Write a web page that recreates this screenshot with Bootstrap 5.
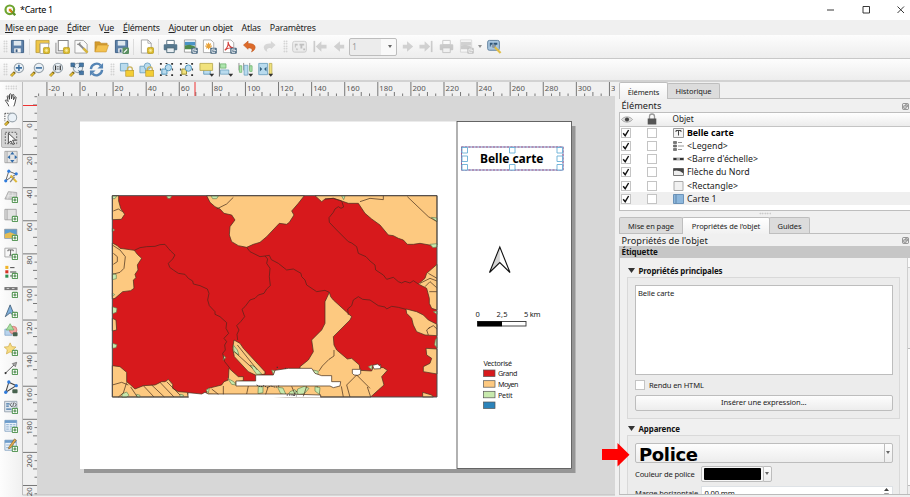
<!DOCTYPE html>
<html lang="fr">
<head>
<meta charset="utf-8">
<title>*Carte 1</title>
<meta name="viewport" content="width=device-width, initial-scale=1">
<link rel="stylesheet" href="https://cdn.jsdelivr.net/npm/bootstrap@5.3.0/dist/css/bootstrap.min.css">
<style>
body{font-family:"Noto Sans","Open Sans",sans-serif;font-size:9px;line-height:12px;color:#222;background:#f0f0f0;width:910px;height:497px;overflow:hidden;cursor:default}
svg{display:block;flex:none}
.titlebar{height:20px;background:#fff;padding:0 5px 0 4px;letter-spacing:-.3px}
.menus{height:15px;padding-left:5px;background:#f0f0f0;gap:8.8px;font-size:8.9px;line-height:15px;letter-spacing:-.21px}
.menus a{color:#222;text-decoration:none;white-space:nowrap}
.tools{background:linear-gradient(#fdfdfd,#ededed);border-bottom:1px solid #c8c8c8;padding-left:7.5px}
.tools-a{height:24px}.tools-b{height:23px;border-bottom:2px solid #d2d2d2}
.slot{width:19.8px;flex:none;display:flex;justify-content:center;align-items:center}
.slot svg{width:15px;height:15px}
.gap-line{width:5.2px;flex:none;height:16px;border-left:1px solid #dcdcdc;margin-left:2px;margin-right:-2px}
.grip{width:5px;height:13px;flex:none;background:radial-gradient(circle,#c2c2c2 .7px,transparent .9px) 0 0/2.5px 2.5px}
.off{opacity:.33;filter:grayscale(1)}
.pagebox{width:48px;height:18px;border:1px solid #bdbdbd;border-radius:2px;background:linear-gradient(90deg,#ececec 68%,#f9f9f9 68%);color:#999;padding:0 4px 0 2px;font-size:8px;flex:none}
.caret{width:0;height:0;border:2.6px solid transparent;border-top:3px solid #666;border-bottom:0}
.workspace{height:415px}
.sidebar-tools{width:22px;flex:none;background:linear-gradient(90deg,#fdfdfd,#f0f0f0);padding-top:3px}
.sidebar-tools .slot{width:20px;height:19.2px;margin-left:1px;border-radius:2px}
.sidebar-tools .slot svg{width:14px;height:14px}
.sidebar-tools .picked{background:#d3d3d3;border:1px solid #b4b4b4}
.grip-h{width:12px;height:5px;margin:0 auto;background:radial-gradient(circle,#c2c2c2 .7px,transparent .9px) 0 0/2.5px 2.5px;flex:none}
.splitter{width:4px;flex:none}
.dock{width:291px;flex:none}
.dock-tabs{height:17px;border-bottom:1px solid #bebebe}
.dock-tabs button{font-family:inherit;font-size:7.5px;line-height:10px;letter-spacing:-.1px;border:1px solid #bebebe;border-bottom:0;background:#dcdcdc;color:#222;padding:1px 0 0;height:15.5px;border-radius:2px 2px 0 0;margin-left:-1px;white-space:nowrap}
.dock-tabs button.now{background:linear-gradient(#fff,#f1f1f1);height:17px;margin-bottom:-1px}
.dock-title{height:12.5px;padding:2px 1px 0 2.5px;font-size:9.2px}
.tree{height:99px;background:#fff;border:1px solid #bebebe;border-right:0}
.tree-head{height:14px;background:linear-gradient(#fff,#ececec);border-bottom:1px solid #c4c4c4;font-size:8.2px}
.tree-row{height:13.15px;font-size:8.8px;white-space:nowrap}
.item-icon{margin-right:3.5px}
.tick{width:10px;height:10px;border:1px solid #c4c4c4;background:#fff;flex:none}
.c1{width:26.5px;padding-left:1px}.c2{width:26px}
.seam{height:6px}
.section-bar{height:12px;background:#c6c6c6;font-weight:700;font-size:8px;letter-spacing:-.1px;padding-left:2.5px;color:#111}
.props{height:236.5px;overflow:hidden;border-left:1px solid #c4c4c4;border-bottom:1px solid #bbb}
.props-in{width:288px;border-right:1px solid #cfcfcf;padding:6.5px 7px 0;height:237px}
.track{width:3px;background:linear-gradient(#fbfbfb 0 9px,#c9c9c9 9px 10px,#f0f0f0 10px 90px,#bbb 90px 91px,#fcfcfc 91px 227px,#bbb 227px 228px,#eee 228px)}
.sec-h{font-weight:700;font-size:7.9px;letter-spacing:-.1px;height:12px;padding-left:.5px;color:#111}
.frame-g{border:1px solid #d9d9d9;background:#ececec;padding:7px 6.5px 0 7px}
.frame-a{height:142px}.frame-b{height:80px}
.note{height:90.5px;border:1px solid #bdbdbd;background:#fff;padding:1.5px 2px;font-size:7.6px;letter-spacing:-.12px}
.small-t{font-size:7.6px;letter-spacing:-.15px}
.fld{width:65.5px}
.row-c{margin-top:3.5px}.row-m{margin-top:4px}
.num{padding:0 3px}
.btn-q{height:15.5px;border:1px solid #bdbdbd;border-radius:2px;background:linear-gradient(#fdfdfd,#ededed);font-size:7.6px;letter-spacing:-.1px;padding:0;line-height:13px;color:#222;font-family:inherit}
.drop{width:9px;border:1px solid #bdbdbd;border-radius:0 2px 2px 0;background:linear-gradient(#fdfdfd,#ededed);margin-left:-1px}
.police{height:20px;border:1px solid #bdbdbd;border-radius:2px 0 0 2px;background:linear-gradient(#fdfdfd,#ededed);font:700 18px/21px "DejaVu Sans","Noto Sans",sans-serif;padding-left:3px;color:#000;letter-spacing:-.35px}
.ink{width:63px;height:15.5px;border:1px solid #bdbdbd;border-radius:2px;background:#f7f7f7;padding:1px 2px}
.ink i{display:block;height:100%;background:#000;border-radius:1px}
.pointer{position:absolute;left:602px;top:443px}
text{font-family:"Noto Sans",sans-serif}
.rl text{font-size:7.8px;fill:#555}
</style>
<script src="https://cdn.jsdelivr.net/npm/bootstrap@5.3.0/dist/js/bootstrap.bundle.min.js"></script>
</head>
<body>
<svg width="0" height="0" class="position-absolute">
<defs>
<g id="plus"><rect x="9.5" y="9.5" width="6" height="6" rx="1" fill="#fff" stroke="#5b9a5b" stroke-width="1.3"/><path d="M12.5 10.7v3.6M10.7 12.5h3.6" stroke="#3f803f" stroke-width="1.2"/></g>
<g id="spark"><rect x="9" y="9" width="6.5" height="6.5" rx="1.2" fill="#d9b92a" stroke="#b3951a" stroke-width=".7"/><path d="M12.2 10.2v4M10.2 12.2h4M10.9 10.9l2.7 2.7M13.6 10.9l-2.7 2.7" stroke="#fff3b0" stroke-width=".7"/></g>
<g id="expo"><rect x="8.8" y="9.3" width="7" height="6.4" rx="1" fill="#4b6a82"/><path d="M14 10.8h-3.4v3.4H14M12 12.4h3" stroke="#fff" fill="none" stroke-width=".9"/></g>
<g id="dn"><path d="M11 12.5h5.2l-2.6 3.2z" fill="#333"/></g>
<g id="lens"><path d="M1.2 14.8l4-4" stroke="#7a6514" stroke-width="3"/><path d="M1.2 14.8l3-3" stroke="#e3bd3a" stroke-width="2"/><circle cx="9.5" cy="6.3" r="5" fill="#eaf1f7" stroke="#9aa5ad" stroke-width="1.2"/></g>
<g id="lock"><path d="M9 9.5V7.800a2.600 2.600 0 0 1 5.200 0v1.700" fill="none" stroke="#c9b25c" stroke-width="1.4"/><rect x="7.2" y="9" width="8.600" height="6.200" fill="#f3cd35" stroke="#b8962a" stroke-width=".7"/></g>
<g id="corners" fill="#333"><path d="M1 1h2v2H1zM7 1h2v1H7zM13 1h2v2h-2zM1 7h1v2H1zM1 13h2v2H1zM7 14h2v1H7zM13 13h2v2h-2zM14 7h1v2h-1z"/></g>
<symbol id="save" viewBox="0 0 16 16"><path d="M1.500 1.500h13v13h-13z" fill="#5c80a8" stroke="#3e5f84"/><path d="M4 2h8v5H4z" fill="#dfe8ef"/><path d="M4.500 10h7v4.500h-7z" fill="#f4f4f4"/><path d="M6 11h2v3H6z" fill="#3e5f84"/></symbol>
<symbol id="newlay" viewBox="0 0 16 16"><path d="M1 1.500h14v4H5v9H1z" fill="#efc648" stroke="#ad8c22" stroke-width=".7"/><path d="M5.500 4.500h9v11h-9z" fill="#fdfdfd" stroke="#999" stroke-width=".8"/><use href="#spark"/></symbol>
<symbol id="dup" viewBox="0 0 16 16"><path d="M1 4v11h10" fill="none" stroke="#888"/><path d="M3.500 1.500h10.500v11h-10.500z" fill="#fff" stroke="#888" stroke-width="1.100"/><use href="#spark"/></symbol>
<symbol id="mgr" viewBox="0 0 16 16"><path d="M1 1.500h9l4 4v9.500H1z" fill="#fafafa" stroke="#999" stroke-width=".9"/><path d="M5 5l9 9" stroke="#8a8a8a" stroke-width="2.200"/><path d="M10 10l4.500 4.500" stroke="#d8b63c" stroke-width="2.600"/><path d="M3.500 5.500a2.200 2.200 0 0 0 3-2" fill="none" stroke="#888" stroke-width="1.300"/></symbol>
<symbol id="open" viewBox="0 0 16 16"><path d="M1 13.500V3h5l1.500 1.500H14V7" fill="#d49b2b" stroke="#b9852a" stroke-width=".6"/><path d="M1 13.800L3.500 6.500H15.500L13 13.800z" fill="#f3c14f" stroke="#c2902e" stroke-width=".6"/></symbol>
<symbol id="saveas" viewBox="0 0 16 16"><use href="#save"/><rect x="9" y="9" width="7" height="7" rx="1" fill="#5a8f62"/><path d="M10.500 14.500l3.500-3.500" stroke="#fff" stroke-width="1.300"/></symbol>
<symbol id="page" viewBox="0 0 16 16"><path d="M2.500 1h7l3.500 3.500V15H2.500z" fill="#fff" stroke="#999" stroke-width=".9"/><path d="M9.500 1v3.500H13" fill="none" stroke="#999" stroke-width=".8"/><use href="#spark"/></symbol>
<symbol id="print" viewBox="0 0 16 16"><path d="M4 1.500h8V6H4z" fill="#fff" stroke="#57707f" stroke-width="1"/><rect x=".8" y="5.500" width="14.400" height="6.500" rx="1" fill="#56788f"/><path d="M4 9.500h8v5H4z" fill="#e8eef2" stroke="#44606f" stroke-width=".9"/></symbol>
<symbol id="eimg" viewBox="0 0 16 16"><path d="M1.500 1h12v13h-12z" fill="#fff" stroke="#888" stroke-width=".8"/><path d="M2 3h11v4H2z" fill="#4a93c6"/><path d="M2 7l5-1 6 2v3H2z" fill="#4f8a4a"/><use href="#expo"/></symbol>
<symbol id="esvg" viewBox="0 0 16 16"><path d="M1.500 1h8l3 3v10.500h-11z" fill="#fff" stroke="#999" stroke-width=".8"/><path d="M7 4v7M3.500 7.500h7M4.500 5l5 5M9.500 5l-5 5" stroke="#e8a23a" stroke-width="1.300"/><use href="#expo"/></symbol>
<symbol id="epdf" viewBox="0 0 16 16"><path d="M1.500 1h8l3 3v10.500h-11z" fill="#fff" stroke="#999" stroke-width=".8"/><path d="M3 12c3-3 4-6 3.500-9C7 7 9 9 12 9.500 8 9 5 10 3 12z" fill="none" stroke="#d3423c" stroke-width="1.200"/><use href="#expo"/></symbol>
<symbol id="undo" viewBox="0 0 16 16"><path d="M1.500 6.500L6.500 2.200V4.800c5 0 8 1.500 7.500 4.700-.3 2-2 3.400-4 4.300 1.500-2.300 1-4.300-3.500-4.300V11z" fill="#dd6b2b" stroke="#b8531c" stroke-width=".5"/></symbol>
<symbol id="redo" viewBox="0 0 16 16"><path d="M14.500 6.500L9.500 2.200V4.800c-5 0-8 1.500-7.500 4.700.3 2 2 3.400 4 4.300-1.500-2.300-1-4.300 3.500-4.300V11z" fill="#999"/></symbol>
<symbol id="atlas" viewBox="0 0 16 16"><rect x=".7" y="2.500" width="14.600" height="11.500" rx="2" fill="#d2dfe8" stroke="#777"/><path d="M3 5h3v2H4v2H3zM8 5h5v2h-2v3H9V7H8zM4 10h2v2H5zM12 10h2v2h-2z" fill="#555"/></symbol>
<symbol id="first" viewBox="0 0 16 16"><path d="M2.500 2v12" stroke="#777" stroke-width="1.800"/><path d="M4 8l6-5.500V6h5.500v4H10v3.500z" fill="#888"/></symbol>
<symbol id="prev" viewBox="0 0 16 16"><path d="M2 8l6.500-5.500V6H13v4H8.500v3.500z" fill="#888"/></symbol>
<symbol id="next" viewBox="0 0 16 16"><path d="M14 8L7.500 2.500V6H3v4h4.500v3.500z" fill="#888"/></symbol>
<symbol id="last" viewBox="0 0 16 16"><path d="M13.500 2v12" stroke="#777" stroke-width="1.800"/><path d="M12 8L6 2.500V6H.5v4H6v3.500z" fill="#888"/></symbol>
<symbol id="aset" viewBox="0 0 16 16"><rect x=".7" y="1.500" width="12.500" height="10.500" rx="1.800" fill="#a9c6df" stroke="#5e7f9d"/><path d="M3 4h3v2H4v2H3zM7 4h4v2H9v2H8V6H7z" fill="#2f5678"/><path d="M6.500 7l8 8" stroke="#e0bd45" stroke-width="2.400"/><circle cx="7" cy="7.500" r="2" fill="#8a97a3"/></symbol>
<symbol id="zin" viewBox="0 0 16 16"><use href="#lens"/><path d="M9.500 3v6.600M6.200 6.300h6.600" stroke="#3d6f9f" stroke-width="1.700"/></symbol>
<symbol id="zout" viewBox="0 0 16 16"><use href="#lens"/><path d="M6.200 6.300h6.600" stroke="#3d6f9f" stroke-width="1.700"/></symbol>
<symbol id="z11" viewBox="0 0 16 16"><use href="#lens"/><path d="M7 3.700v5M12 3.700v5M9.500 4.500v1M9.500 7v1" stroke="#333" stroke-width="1.300"/></symbol>
<symbol id="zfull" viewBox="0 0 16 16"><use href="#lens"/><path d="M2 1h4v4H2zM11 1h4.500v4H11zM11 9.500h4.500v4H11z" fill="#4678a8" stroke="#2f5678" stroke-width=".6"/><path d="M4 4l3 2M12 4l-2 2M12 11l-2-2" stroke="#2f5678"/></symbol>
<symbol id="refresh" viewBox="0 0 16 16"><path d="M2 7.500A6.200 6.200 0 0 1 12.500 3.600" fill="none" stroke="#5585b5" stroke-width="2.500"/><path d="M15 1v6H9z" fill="#5585b5"/><path d="M14 8.500A6.200 6.200 0 0 1 3.500 12.400" fill="none" stroke="#5585b5" stroke-width="2.500"/><path d="M1 15V9h6z" fill="#5585b5"/></symbol>
<symbol id="lk" viewBox="0 0 16 16"><path d="M1.500 1.500h8v8h-8z" fill="#b9dbee" stroke="#6ba0bf" stroke-width=".9"/><use href="#lock"/></symbol>
<symbol id="ulk" viewBox="0 0 16 16"><path d="M1 4.500h6v7H1z" fill="#b9dbee" stroke="#6ba0bf" stroke-width=".9"/><circle cx="9" cy="4.500" r="3.500" fill="#b9dbee" stroke="#6ba0bf" stroke-width=".9"/><use href="#lock"/></symbol>
<symbol id="grp" viewBox="0 0 16 16"><use href="#corners"/><path d="M3 7.500h5.500V13H3z" fill="#b9dbee" stroke="#4f93bb"/><circle cx="10" cy="6" r="3.400" fill="#b9dbee" stroke="#4f93bb"/></symbol>
<symbol id="ugrp" viewBox="0 0 16 16"><use href="#corners"/><path d="M3 7.500h5V13H3z" fill="#f1e27c" stroke="#998b2c"/><circle cx="10" cy="6.500" r="3.400" fill="#b9dbee" stroke="#4f93bb"/></symbol>
<symbol id="raise" viewBox="0 0 16 16"><path d="M5 7.500h7v5.500H5z" fill="#b9dbee" stroke="#6ba0bf"/><path d="M1 1.500h13.500v7.500H1z" fill="#f1e27c" stroke="#b7a850" stroke-width=".9"/><use href="#dn"/></symbol>
<symbol id="alignl" viewBox="0 0 16 16"><path d="M1.500 .5v15" stroke="#666"/><path d="M2.500 2h6v4.500h-6z" fill="#aee5ae" stroke="#6bb06b" stroke-width=".8"/><path d="M2.500 8.500h9v4.500h-9z" fill="#b9dbee" stroke="#6ba0bf" stroke-width=".8"/><use href="#dn"/></symbol>
<symbol id="distr" viewBox="0 0 16 16"><path d="M1 1v8M6 1v8M12.500 1v8" stroke="#777" stroke-width=".8"/><path d="M1.500 4h2.500v7H1.500zM12.500 4H15v6h-2.500z" fill="#aee5ae" stroke="#6bb06b" stroke-width=".8"/><path d="M6.500 3.500h4V14h-4z" fill="#b9dbee" stroke="#6ba0bf" stroke-width=".8"/><use href="#dn"/></symbol>
<symbol id="resz" viewBox="0 0 16 16"><path d="M.8 1.500h9.400v12H.8z" fill="#b9dbee" stroke="#6ba0bf" stroke-width=".9"/><path d="M2 5v5l2.500-2.500zM9 5v5L6.500 7.500z" fill="#33607f"/><path d="M12 1.500h2.800v12H12z" fill="#f1e27c" stroke="#b7a850" stroke-width=".8"/><use href="#dn"/></symbol>
<symbol id="hand" viewBox="0 0 16 16"><path d="M5.500 15.200C4.500 12 2.500 10.500 1.500 8.500c.8-1 2-.4 3.200 1.200L3.700 4c.2-1.300 1.500-1.200 1.800 0l.8 3.200L6.300 1.800c.3-1.200 1.700-1.200 2 0l.3 5 1-4.500c.4-1.100 1.800-.8 1.800.4l-.5 5 1.500-3c.7-.8 1.700-.3 1.400.8-.8 3-1 6.500-2.600 9.700" fill="#fff" stroke="#333" stroke-width="1"/></symbol>
<symbol id="ztool" viewBox="0 0 16 16"><path d="M1 1.500h8M1 1.500v9" stroke="#333" stroke-dasharray="1.500 1.200"/><use href="#lens"/></symbol>
<symbol id="sel" viewBox="0 0 16 16"><path d="M1.500 1.500h13v13h-13z" fill="#dcdcdc" stroke="#555" stroke-dasharray="2 1.500"/><path d="M5 2.500l8.500 8H9.800l2 4-1.800.9-2-4L5 13.800z" fill="#fff" stroke="#222" stroke-width=".9"/></symbol>
<symbol id="mvc" viewBox="0 0 16 16"><path d="M1 1.500h14v13H1zM3.500 1.500v13" fill="#e4e4e4" stroke="#999" stroke-width=".9"/><path d="M9.500 2l2.400 3H7.100zM9.500 14.500l2.400-3H7.100zM4 8.200l3-2.400v4.800zM15.200 8.200l-3-2.400v4.800z" fill="#326ba8"/></symbol>
<symbol id="nodes" viewBox="0 0 16 16"><path d="M2 13.500L5.500 2.500 14 6l-7 4z" fill="none" stroke="#555"/><circle cx="5.500" cy="2.500" r="1.800" fill="#2f7bdc"/><circle cx="14" cy="5.500" r="1.800" fill="#2f7bdc"/><circle cx="2" cy="13.500" r="1.800" fill="#2f7bdc"/><path d="M7.500 7.500l7 7.500" stroke="#dfb93a" stroke-width="2.400"/><path d="M7 15l5-6" stroke="#888" stroke-width="1.500"/></symbol>
<symbol id="m3d" viewBox="0 0 16 16"><path d="M1 11.500L5 3l9.500 1v8z" fill="#cfcfcf" stroke="#999" stroke-width=".8"/><path d="M3 8l11-1M6 4l-2 7M10 4v8" stroke="#eee" stroke-width=".7"/><use href="#plus"/></symbol>
<symbol id="amap" viewBox="0 0 16 16"><path d="M1 1.500h13v12H1zM3.500 1.500v12" fill="#e2e2e2" stroke="#999" stroke-width=".9"/><use href="#plus"/></symbol>
<symbol id="aimg" viewBox="0 0 16 16"><path d="M.7 2.500h14v10.500H.7z" fill="#5d9dd0" stroke="#8a8a8a" stroke-width=".7"/><path d="M1 8l6-2 7.500 3v3.700H1z" fill="#e6bd52"/><use href="#plus"/></symbol>
<symbol id="atxt" viewBox="0 0 16 16"><path d="M1 2.500h13v10H1z" fill="#f7f7f7" stroke="#999" stroke-width=".9"/><path d="M4.500 6V4.500h6V6M7.500 4.500v6M6 10.500h3" fill="none" stroke="#555"/><use href="#plus"/></symbol>
<symbol id="aleg" viewBox="0 0 16 16"><path d="M1.500 1h3.500v3.500H1.500z" fill="#f0b429"/><path d="M1.500 6h3.500v3.500H1.500z" fill="#d43324"/><path d="M1.500 11h3.500v3.500H1.500z" fill="#2f8f52"/><path d="M7 3h5M7 8h7M7 12.500h3" stroke="#444" stroke-width="1.100"/><use href="#plus"/></symbol>
<symbol id="abar" viewBox="0 0 16 16"><path d="M.5 3.500h15v3.500H.5z" fill="#777"/><path d="M3 5.200h3M9 5.200h3" stroke="#ddd"/><use href="#plus"/></symbol>
<symbol id="anor" viewBox="0 0 16 16"><path d="M1.500 14.500L7 1l5.500 13.500L7 10z" fill="#7fb0dc" stroke="#46617a"/><use href="#plus"/></symbol>
<symbol id="ashp" viewBox="0 0 16 16"><path d="M1 7h8v7H1z" fill="#b9d4ee" stroke="#789fc4" stroke-width=".8"/><circle cx="10.500" cy="8" r="4.300" fill="#f0a6a0" stroke="#cc6f69" stroke-width=".8"/><path d="M2.500 8L7 .8 11.300 8z" fill="#a9dfa2" stroke="#6bab66" stroke-width=".8"/><rect x="10" y="10.500" width="5.500" height="4.500" rx="1" fill="#47624e"/></symbol>
<symbol id="astar" viewBox="0 0 16 16"><path d="M7 1l2 4.300 4.700.5-3.500 3.100 1 4.700L7 11.200l-4.200 2.400 1-4.700L.3 5.800 5 5.300z" fill="#f7dd83" stroke="#cfa945" stroke-width=".8"/><use href="#plus"/></symbol>
<symbol id="aarr" viewBox="0 0 16 16"><path d="M1.500 14L12 4" stroke="#555"/><circle cx="1.800" cy="13.800" r="1.200" fill="#333"/><path d="M14.500 1.500l-1.500 5L9.500 3z" fill="#aaa" stroke="#555" stroke-width=".7"/><use href="#plus"/></symbol>
<symbol id="anod" viewBox="0 0 16 16"><path d="M2 14L5.500 2.500 14 6.500z" fill="#f0f0f0" stroke="#444" stroke-width="1.200"/><circle cx="5.500" cy="2.300" r="1.900" fill="#2f7bdc"/><circle cx="14" cy="6.500" r="1.900" fill="#2f7bdc"/><circle cx="2" cy="14" r="1.900" fill="#2f7bdc"/><rect x="9.500" y="10.500" width="6" height="4.500" rx="1" fill="#47624e"/></symbol>
<symbol id="ahtm" viewBox="0 0 16 16"><path d="M.7 1.500h14v12H.7z" fill="#dfe6ee" stroke="#8b97a5" stroke-width=".9"/><path d="M2.500 4.500h4M2.500 7h3M2.500 10.500h6" stroke="#4678a8" stroke-width="1.400"/><path d="M9 3L7 5.500 9 8M12 3l2 2.500L12 8M11 3L10 8" fill="none" stroke="#444" stroke-width=".9"/><use href="#plus"/></symbol>
<symbol id="atab" viewBox="0 0 16 16"><path d="M1 1.500h13.500v12.500H1z" fill="#eaf2fa" stroke="#7d9dbd" stroke-width=".9"/><path d="M1 1.500h13.500v3H1z" fill="#6d9ccb"/><path d="M2.500 6.500h10.500M2.500 9h10.500M2.500 11.500h6" stroke="#9bb9d8" stroke-width="1.300" stroke-dasharray="3 1"/><use href="#plus"/></symbol>
<symbol id="afix" viewBox="0 0 16 16"><path d="M1 2.500h13v11.500H1z" fill="#eaf2fa" stroke="#7d9dbd" stroke-width=".9"/><path d="M1 2.500h13v3H1z" fill="#6d9ccb"/><path d="M2.500 8h9M2.500 11h6" stroke="#9bb9d8" stroke-width="1.300"/><path d="M5.500 10.500L12 1l2 1.500-6.500 9-2.300.9z" fill="#e5ab4c" stroke="#7a5a26" stroke-width=".7"/><use href="#plus"/></symbol>
<symbol id="undock" viewBox="0 0 8 8"><rect x=".5" y=".5" width="7" height="7" rx="1.500" fill="none" stroke="#777" stroke-width=".9"/><path d="M2 3.200h2.800V6H2zM3.500 2h2.600v2.700" fill="none" stroke="#666" stroke-width=".8"/></symbol>
<symbol id="chk" viewBox="0 0 8 8"><path d="M1.200 4.200L3.200 6.700 6.600 1" fill="none" stroke="#111" stroke-width="1.400"/></symbol>
</defs>
</svg>

<header class="titlebar d-flex align-items-center">
  <svg width="12" height="12" viewBox="0 0 12 12"><circle cx="5.800" cy="5.800" r="4.300" fill="none" stroke="#6ea530" stroke-width="2.200"/><path d="M6 6l5.200 5.200" stroke="#5c9127" stroke-width="2.300"/><path d="M4.800 4.800h3L6.800 6l2 2-1 1-2-2-1 .8z" fill="#ee7913"/></svg>
  <span class="ms-1 text-black">*Carte 1</span>
  <svg class="ms-auto" width="80" height="12" viewBox="0 0 80 12"><path d="M2 6h7M38 2.500h6.500v6.500H38zM72.500 2.500l6.500 6.500M79 2.500L72.500 9" fill="none" stroke="#222" stroke-width=".9"/></svg>
</header>
<nav class="menus d-flex">
  <a href="#"><u>M</u>ise en page</a><a href="#"><u>É</u>diter</a><a href="#">V<u>u</u>e</a><a href="#"><u>É</u>léments</a><a href="#"><u>A</u>jouter un objet</a><a href="#">Atlas</a><a href="#">Paramètres</a>
</nav>
<div class="tools tools-a d-flex align-items-center" id="ta"></div>
<div class="tools tools-b d-flex align-items-center" id="tb"></div>

<main class="workspace d-flex">
  <aside class="sidebar-tools d-flex flex-column" id="tl"></aside>
  <svg width="593" height="415" viewBox="22 82 593 415" id="canvas">
    <rect x="22" y="82" width="593" height="415" fill="#f0f0f0"/>
    <rect x="37" y="96" width="578" height="399" fill="#d7d7d7"/>
    <path d="M22.500 82v413h593" fill="none" stroke="#bdbdbd"/>
    <g class="rl" id="rulers" stroke-width="1"></g>
    <rect x="84" y="126" width="491.500" height="347" fill="#969696"/>
    <rect x="80" y="121.500" width="492" height="347.500" fill="#fff"/>
    <rect x="457" y="121.500" width="114.500" height="347" fill="#fff" stroke="#555" stroke-width=".9"/>
    <g transform="translate(100 185) scale(.33333)" stroke="#4c3320" stroke-width="2.200" stroke-linejoin="round" fill="none">
      <rect x="37" y="32" width="974" height="604" fill="#d7191c" stroke="none"/>
      <g fill="#fdc980">
        <path d="M37 32H56V48L62 70 74 88 64 103 37 104Z"/>
        <path d="M37 174L52 182 60 190 75 192 103 196 112 208 125 220 112 240 114 255 105 268 108 278 100 285 102 310 92 317 68 320 45 340 37 342Z"/>
        <path d="M37 400L48 405 50 435 37 438Z"/>
        <path d="M37 542L60 545 80 562 80 590 92 600 105 612 130 602 165 600 185 590 195 590 205 583 218 598 218 610 235 620 262 622 266 636H37Z"/>
        <path d="M318 625L325 610 365 600 372 590 385 585 387 550 415 575 430 575 430 587 408 590 408 600H662V636H560L318 627Z"/>
        <path d="M402 465L420 475 430 490 495 560 495 567 470 572 445 560 403 515 398 490Z"/>
        <path d="M320 32L330 52 345 65 360 72 372 85 395 90 405 105 390 125 388 150 395 170 415 182 440 187 460 178 480 172 500 155 538 115 560 118 568 112 582 90 575 78 595 55 613 32Z"/>
        <path d="M645 32L665 50 675 42 700 40 725 48 745 55 775 55 795 85 815 102 840 120 865 150 880 152 895 160 910 165 922 178 940 178 960 175 1000 182 1011 180V32Z"/>
        <path d="M1011 238L980 265 975 280 955 297 980 310 988 340 988 355 995 370 1011 375Z"/>
        <path d="M918 372L950 380 970 390 985 405 1011 418V452L975 450 950 440 940 420 935 400 920 385Z"/>
        <path d="M1011 492L978 490 980 510 995 520 990 535 970 545 970 560 1011 567Z"/>
        <path d="M968 622L995 630 1000 636H968Z"/>
        <path d="M688 322L692 335 700 345 755 395 750 405 700 455 702 480 710 495 742 522 755 520 778 540 780 556 815 558 820 545 850 548 862 556 845 575 852 600 835 615 812 636H662L650 600H600V545L625 525 640 500 635 465 665 435 675 415 675 350Z"/>
      </g>
      <g fill="#c7e9ad" stroke="#657f50" stroke-width="2">
        <path d="M37 33h13l-5 8H37zM200 33h15l-4 7h-8zM333 33h22l-5 8h-12zM37 130l7 5-7 5zM37 265l12 4v12l-12 3zM37 365l14 5-2 12-12 4zM37 475l14 4-3 9-11 2zM37 324l7 5-7 6zM66 627l14-6 7 10-8 6H66zM110 628l10 3v5h-10zM240 628l10 2v5h-10zM370 510l7 8-7 8zM318 615l10-5-3 14zM400 480l12 15 5 15-15-10zM450 540l15 5 20 22-15 1zM383 580l18 10 8 10-14-2zM725 33h10l-4 11zM994 97l17 2v11zM990 178l21-2v10l-12 2zM1000 380l11-2v10zM1006 465l5-7v30l-7-8zM640 555l15 4-2 12-14-5zM515 555l10 2-5 12zM690 588l13 8-4 10zM593 612l20-8 14 6-14 16-23 4zM475 603l14 2v18l-15 3zM533 607l16 2 10 22-17-5zM645 605l15 3-2 20-13-10zM805 545l12-5-2 14z"/>
        <path d="M570 620l15-6 10 14h-30z"/>
      </g>
      <path d="M408 588H467V570H520L525 556 565 550H635L645 565 665 572H695V590H722L720 603 700 608 690 603H408Z" fill="#fff"/>
      <path d="M757 553h25v13l-8 5-12-1-5-5zM818 541l15-4 5 5 4-3v12l-20 1z" fill="#fff"/>
      <path d="M264 637V623L285 625 305 627 315 622 325 627H560L662 630V637" fill="#fff"/>
      <g stroke="#5c241c" stroke-width="2.300">
        <path d="M103 196L120 188 140 185 165 184 180 179 195 178 205 190 212 198 225 210 218 222 205 235 209 247 220 255 235 265 255 268 265 280 278 288 280 297 300 302 322 312 327 325 323 345 328 362 345 380 345 388 360 395 380 413 378 430 386 445 372 460 380 470 374 480 376 495 368 505 374 530 390 550"/>
        <path d="M440 187L450 200 462 206 480 215 495 213 503 222 500 235 510 250 508 275 511 302 500 312 492 325 475 330 465 340 450 345 435 365 426 373 434 395 422 410 410 422 417 435 411 448 413 465"/>
        <path d="M495 213L508 211 514 224 535 235 560 255 580 252 603 265 605 275 615 285 620 300 650 320 675 316 688 322"/>
        <path d="M675 42L700 40 725 48 731 66 723 70 715 65 705 72 700 82 687 98 688 112 710 135 745 170 755 174 770 185 775 205 798 215 810 228 825 240 827 255 850 270 860 283 880 277 895 290 905 294 915 289 930 294 940 287 955 297"/>
        <path d="M745 390L743 372 755 362 760 345 775 335 788 343 810 345 835 362 855 366 860 372 875 364 895 367 918 373"/>
      </g>
      <path d="M40 78l15-6 13 8M37 180l23 15 16 20-4 35-12 12-23 6M40 205l12 10v15l-12 8M37 600l28-8 20 8M55 636l15-12 10-32M112 636l-20-30M130 602l32 34M155 600l38 36M180 592l42 44M200 590l40 40M350 72l30-15 20-20M780 50l30-10 40 4v-12M922 35l63 60 26 15M412 480l60 75M403 500l55 50M657 558l10-15 20-20 15-10v-18M770 570l-30 30 10 36M770 570l40 40M812 636l-10-30M730 636l-6-32M620 604l-10 30M445 603l-5 24M505 604l-8 24M575 604l10 24M335 612l20 16M370 603v25M985 265l26 15M960 295l30-15 21 8M975 305l15-15 20 18M988 320h23M985 430l15-8 11 10M985 450l-5-15 10-8"/>
      <path d="M530 547h5M555 552l3-6M470 600l12 6 10-4 10 6 10-5 15 4 12-5M580 632l10-14M560 630h20l10 3" stroke="#333" stroke-width="3" stroke-dasharray="4 3"/>
      <path d="M266 636H37V32H1011V636H662" stroke="#4c4c4c" stroke-width="3"/>
    </g>
    <rect x="461.500" y="147" width="101.500" height="23" fill="none" stroke="#5f7fc0" stroke-width=".9"/><rect x="461.500" y="147" width="101.500" height="23" fill="none" stroke="#b0507c" stroke-width=".9" stroke-dasharray="2 1.500"/>
    <path d="M462 147.500h5.500v5.500H462zM509.500 147.500h5.500v5.500h-5.500zM557 147.500h5.500v5.500H557zM462 156h5.500v5.500H462zM557 156h5.500v5.500H557zM462 164.500h5.500v5.500H462zM509.500 164.500h5.500v5.500h-5.500zM557 164.500h5.500v5.500H557z" fill="#fff" stroke="#66afd6" stroke-width=".9"/>
    <text x="480" y="162.500" font-size="12" font-weight="700" textLength="63.500">Belle carte</text>
    <path d="M499.800 247V262.500L489.500 272.500z" fill="#d4d4d4"/><path d="M499.800 247L510 272.500 499.800 262.500 489.500 272.500z" fill="none" stroke="#111" stroke-width="1.100"/>
    <g font-size="7.500" fill="#222"><text x="475.500" y="316.500">0</text><text x="496.500" y="316.500" textLength="11">2,5</text><text x="524" y="316.500" textLength="16.500">5 km</text></g>
    <rect x="477.500" y="321.500" width="48.500" height="4.500" fill="#fff" stroke="#333" stroke-width=".9"/><rect x="477.500" y="321.300" width="24.500" height="5" fill="#000"/>
    <g font-size="7.200" fill="#222"><text x="483.500" y="366" textLength="28.500">Vectorisé</text><text x="498" y="376.300" textLength="19.500">Grand</text><text x="498" y="387" textLength="20.500">Moyen</text><text x="498" y="397.500" textLength="14.500">Petit</text></g>
    <g stroke="#555" stroke-width=".7"><rect x="483.500" y="370" width="11.500" height="6.500" fill="#d7191c"/><rect x="483.500" y="380.700" width="11.500" height="6.500" fill="#fdc980"/><rect x="483.500" y="391.300" width="11.500" height="6.500" fill="#c7e9ad"/><rect x="483.500" y="402" width="11.500" height="6.500" fill="#2b83ba"/></g>
  </svg>
  <div class="splitter"></div>
  <section class="dock">
    <div class="dock-tabs d-flex align-items-end">
      <button class="now ms-0" style="width:49px">Éléments</button><button style="width:53px">Historique</button>
    </div>
    <div class="dock-title d-flex align-items-center justify-content-between"><span>Éléments</span><svg width="7" height="7"><use href="#undock"/></svg></div>
    <div class="tree">
      <div class="tree-head d-flex align-items-center">
        <span class="c1"><svg width="12" height="9" viewBox="0 0 12 9"><path d="M.5 4.500C3 1 9 1 11.500 4.500 9 8 3 8 .5 4.500z" fill="#ddd" stroke="#999" stroke-width=".8"/><circle cx="6" cy="4.500" r="2.100" fill="#444"/></svg></span>
        <span class="c2"><svg width="10" height="12" viewBox="0 0 10 12"><path d="M2.500 6V3.500a2.500 2.500 0 0 1 5 0V6" fill="none" stroke="#999" stroke-width="1.300"/><path d="M.7 5.500h8.600v6H.7z" fill="#555"/></svg></span><span>Objet</span>
      </div>
      <div id="rows"></div>
    </div>
    <div class="seam d-flex align-items-center"><div class="grip-h" style="height:2.5px"></div></div>
    <div class="dock-tabs d-flex align-items-end">
      <button class="ms-0" style="width:64px">Mise en page</button><button class="now" style="width:88px">Propriétés de l'objet</button><button style="width:41px">Guides</button>
    </div>
    <div class="dock-title d-flex align-items-center justify-content-between"><span>Propriétés de l'objet</span><svg width="7" height="7"><use href="#undock"/></svg></div>
    <div class="section-bar">Étiquette</div>
    <div class="props d-flex">
      <div class="props-in flex-shrink-0">
        <div class="sec-h d-flex align-items-center gap-1"><svg width="7" height="5"><path d="M0 0h7L3.500 5z" fill="#333"/></svg><span>Propriétés principales</span></div>
        <div class="frame-g frame-a">
          <div class="note">Belle carte</div>
          <div class="d-flex align-items-center small-t gap-1 mt-1 mb-1"><span class="tick"></span><span>Rendu en HTML</span></div>
          <button class="btn-q w-100 d-block">Insérer une expression...</button>
        </div>
        <div class="sec-h d-flex align-items-center gap-1 mt-1"><svg width="7" height="5"><path d="M0 0h7L3.500 5z" fill="#333"/></svg><span>Apparence</span></div>
        <div class="frame-g frame-b">
          <div class="d-flex"><div class="police flex-grow-1">Police</div><div class="drop d-flex align-items-center justify-content-center"><span class="caret"></span></div></div>
          <div class="row-c d-flex small-t align-items-center"><span class="fld">Couleur de police</span><div class="ink"><i></i></div><div class="drop d-flex align-items-center justify-content-center align-self-stretch"><span class="caret"></span></div></div>
          <div class="row-m d-flex small-t align-items-center"><span class="fld">Marge horizontale</span><div class="num flex-grow-1 bg-white border d-flex justify-content-between"><span>0,00 mm</span><svg width="5" height="12"><path d="M0 4h5L2.500 1zM0 6.500h5L2.500 9.500z" fill="#444"/></svg></div></div>
        </div>
      </div>
      <div class="track"></div>
    </div>
  </section>
</main>
<svg class="pointer" width="28" height="24" viewBox="0 0 28 24"><path d="M0 6H15.500V0L27.500 11.700 15.500 23.500V17H0z" fill="#f00"/></svg>

<script>
const slot = (n, c = '') => `<span class="slot ${c}"><svg><use href="#${n}"/></svg></span>`;
const bar = '<span class="gap-line"></span>', grip = '<span class="grip"></span>';
const off = n => slot(n, 'off');
ta.innerHTML = '<span class="grip" style="margin-left:-5px"></span>' + slot('save') + bar +
  ['newlay','dup','mgr','open','saveas'].map(n => slot(n)).join('') + bar + slot('page') +
  '<span class="gap-line" style="width:4px"></span>' +
  ['print','eimg','esvg','epdf','undo'].map(n => slot(n)).join('') + off('redo') +
  '<span class="grip" style="margin:0 2px 0 3.500px"></span>' +
  ['atlas','first','prev'].map(off).join('') +
  '<span class="pagebox d-flex align-items-center justify-content-between">1<i class="caret"></i></span>' +
  ['next','last','print','eimg'].map(off).join('') + '<i class="caret" style="margin:0 2px;opacity:.7"></i>' + slot('aset');
tb.innerHTML = '<span class="grip" style="margin-left:-5px"></span>' +
  ['zin','zout','z11','zfull','refresh'].map(n => slot(n)).join('') +
  '<span class="grip" style="margin:0 1.500px 0 4px"></span>' +
  ['lk','ulk','grp','ugrp','raise','alignl','distr','resz'].map(n => slot(n)).join('');
tl.innerHTML = '<div class="grip-h"></div>' +
  ['hand','ztool','sel','mvc','nodes','m3d','amap','aimg','atxt','aleg','abar','anor','ashp','astar','aarr','anod','ahtm','atab','afix']
  .map(n => slot(n, n === 'sel' ? 'picked' : '')).join('');

const glyph = {
  t: '<path d="M.5 .5h10v9H.5z" fill="#f4f4f4" stroke="#999"/><path d="M3 4V2.500h5V4M5.500 2.500v5" fill="none" stroke="#444"/>',
  l: '<path d="M.5 .5h3v2h-3zM.5 4h3v2h-3zM.5 7.500h3v2h-3z" fill="#777" stroke="#555" stroke-width=".6"/><path d="M5 1.500h4M5 5h6M5 8.500h4" stroke="#999"/>',
  b: '<path d="M0 3.500h11v3H0z" fill="#aaa"/><path d="M.5 5h3M7 5h3.500" stroke="#333" stroke-width="2"/>',
  n: '<path d="M.5 1.500h10v7H.5z" fill="#eee" stroke="#777"/><path d="M.5 1.500h10v5Q6 2.500 .5 4z" fill="#444"/>',
  r: '<path d="M1 .5h9v9H1z" fill="#f1f1f1" stroke="#aaa"/>',
  m: '<path d="M.5 .5h10v9H.5z" fill="#8db7dc" stroke="#6c93b8"/><path d="M3 .5v9" stroke="#5f86ab"/>'
};
rows.innerHTML = [['t','Belle carte'],['l','&lt;Legend&gt;'],['b',"&lt;Barre d'échelle&gt;"],['n','Flèche du Nord'],['r','&lt;Rectangle&gt;'],['m','Carte 1']]
  .map(([g, s], i) => `<div class="tree-row d-flex align-items-center ${i ? '' : 'fw-bold text-black'}" ${i === 5 ? 'style="background:#efefef"' : ''}>
  <span class="c1"><span class="tick d-block"><svg width="8" height="8"><use href="#chk"/></svg></span></span><span class="c2"><span class="tick d-block"></span></span>
  <svg width="11" height="10" viewBox="0 0 11 10" class="item-icon">${glyph[g]}</svg><span>${s}</span></div>`).join('');

// Rulers: 20 mm per labelled division, four subdivisions each
const step = 33.09, parts = [];
const seg = (x1, y1, x2, y2, c = '#777') => parts.push(`<path d="M${x1} ${y1}L${x2} ${y2}" stroke="${c}"/>`);
for (let i = -8; i <= 64; i++) {
  const x = 80 + i * step / 4, y = 121.5 + i * step / 4, v = i * 5;
  if (x > 37 && x < 615) {
    seg(x, i % 4 ? (i % 2 ? 93.5 : 92) : 82, x, 96);
    if (i % 4 === 0) parts.push(`<text x="${x + 1.500}" y="90.5">${v >= 320 ? '3' : v}</text>`);
  }
  if (y > 96 && y < 495) {
    seg(i % 4 ? (i % 2 ? 34.5 : 33) : 23, y, 37, y);
    if (i % 4 === 0 && v >= 0) parts.push(`<text transform="translate(31.5 ${y + 1.800}) rotate(-90)" text-anchor="end">${v === 220 ? '20' : v}</text>`);
  }
}
seg(195, 82, 195, 96, '#e33'); seg(23, 105.5, 37, 105.5, '#e33');
rulers.innerHTML = parts.join('');
</script>
</body>
</html>
